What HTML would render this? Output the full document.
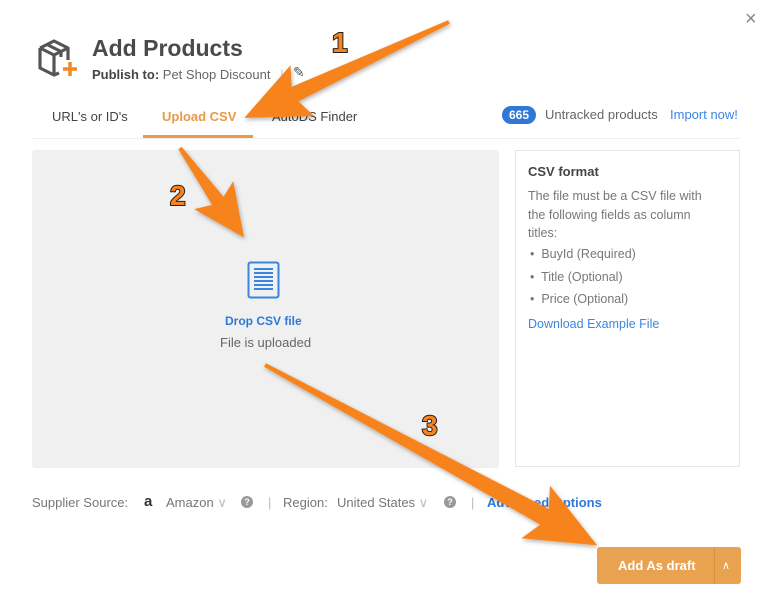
<!DOCTYPE html>
<html><head><style>
body{margin:0;width:771px;height:600px;background:#fff;font-family:"Liberation Sans",sans-serif;position:relative;overflow:hidden;color:#555}
.a{position:absolute;white-space:nowrap}
.b{position:absolute;white-space:nowrap;top:495px;font-size:13px;color:#777}
.q{position:absolute;top:496px;width:12px;height:12px;border-radius:6px;background:#999;color:#fff;font-size:9px;font-weight:bold;text-align:center;line-height:12px}
</style></head><body>
<div class="a" style="left:745px;top:8px;font-size:20px;color:#888">×</div>
<svg class="a" style="left:37px;top:38px" width="42" height="42" viewBox="0 0 42 42">
<path d="M3 10 L17 3 L31 10 L31 22 M3 10 L3 30 L17 37 L22 35 M3 10 L17 17 L31 10 M17 17 L17 37 M10 6.5 L24 13.5 L24 19" fill="none" stroke="#555" stroke-width="3.2" stroke-linejoin="round"/>
<path d="M33 24 V38 M26 31 H40" stroke="#f08a24" stroke-width="3.5"/>
</svg>
<div class="a" style="left:92px;top:35px;font-size:23px;font-weight:bold;color:#4a4a4a">Add Products</div>
<div class="a" style="left:92px;top:67px;font-size:13px;color:#666"><b style="color:#444">Publish to:</b> Pet Shop Discount <span style="color:#ccc;margin:0 6px">|</span></div>
<div class="a" style="left:293px;top:64px;font-size:14px;color:#555">✎</div>
<div class="a" style="left:52px;top:109px;font-size:13px;color:#444">URL's or ID's</div>
<div class="a" style="left:162px;top:109px;font-size:13px;color:#e89a45;font-weight:bold">Upload CSV</div>
<div class="a" style="left:143px;top:135px;width:110px;height:3px;background:#e89a45"></div>
<div class="a" style="left:272px;top:109px;font-size:13px;color:#444">AutoDS Finder</div>
<div class="a" style="left:32px;top:138px;width:708px;height:1px;background:#eee"></div>
<div class="a" style="left:502px;top:106px;width:34px;height:18px;border-radius:9px;background:#2f78d6;color:#fff;font-size:12px;font-weight:bold;text-align:center;line-height:18px">665</div>
<div class="a" style="left:545px;top:107px;font-size:13px;color:#666">Untracked products</div>
<div class="a" style="left:670px;top:107px;font-size:13px;color:#3b86e0">Import now!</div>
<div class="a" style="left:32px;top:150px;width:467px;height:318px;background:#f0f0f0;border-radius:3px"></div>
<svg class="a" style="left:247px;top:261px" width="33" height="38" viewBox="0 0 33 38"><rect x="1.5" y="1.5" width="30" height="35" rx="2" fill="none" stroke="#3a84de" stroke-width="2"/>
<g stroke="#3a84de" stroke-width="2"><path d="M7 8H26M7 12H26M7 16H26M7 20H26M7 24H26M7 28H26"/></g></svg>
<div class="a" style="left:225px;top:314px;font-size:12px;font-weight:bold;color:#2f78d6">Drop CSV file</div>
<div class="a" style="left:220px;top:335px;font-size:13px;color:#666">File is uploaded</div>
<div class="a" style="left:515px;top:150px;width:225px;height:317px;border:1px solid #e6e6e6;box-sizing:border-box"></div>
<div class="a" style="left:528px;top:164px;font-size:13px;font-weight:bold;color:#444">CSV format</div>
<div class="a" style="left:528px;top:187px;font-size:12.5px;line-height:18.5px;color:#777">The file must be a CSV file with<br>the following fields as column<br>titles:</div>
<div class="a" style="left:530px;top:247px;font-size:12.5px;color:#777">•&nbsp; BuyId (Required)</div>
<div class="a" style="left:530px;top:270px;font-size:12.5px;color:#777">•&nbsp; Title (Optional)</div>
<div class="a" style="left:530px;top:292px;font-size:12.5px;color:#777">•&nbsp; Price (Optional)</div>
<div class="a" style="left:528px;top:317px;font-size:12.5px;color:#3b86e0">Download Example File</div>
<div class="b" style="left:32px">Supplier Source:</div>
<div class="b" style="left:144px;color:#333;font-weight:bold;font-size:15px;top:493px">a</div>
<div class="b" style="left:166px">Amazon <span style="color:#bbb">∨</span></div>
<div class="q" style="left:241px">?</div>
<div class="b" style="left:268px;color:#bbb">|</div>
<div class="b" style="left:283px">Region:</div>
<div class="b" style="left:337px">United States <span style="color:#bbb">∨</span></div>
<div class="q" style="left:444px">?</div>
<div class="b" style="left:471px;color:#bbb">|</div>
<div class="b" style="left:487px;color:#2f78d6;font-weight:bold">Advanced Options</div>
<div class="a" style="left:597px;top:547px;width:144px;height:37px;background:#e9a24f;border-radius:3px"></div>
<div class="a" style="left:714px;top:547px;width:1px;height:37px;background:#d89040"></div>
<div class="a" style="left:618px;top:558px;font-size:13px;font-weight:bold;color:#fff">Add As draft</div>
<div class="a" style="left:722px;top:559px;font-size:11px;color:#fff">∧</div>
<svg class="a" style="left:0;top:0" width="771" height="600">
<defs><filter id="s"><feDropShadow dx="1" dy="2" stdDeviation="2" flood-color="#000" flood-opacity=".3"/></filter></defs>
<g fill="#f7831f" filter="url(#s)">
<polygon transform="translate(449,22) rotate(154.9)" points="0,-2 170,-8 162,-28 226,0 162,28 170,8 0,2"/>
<polygon transform="translate(180,148) rotate(54.4)" points="0,-2 65,-7 58,-24 110,0 58,24 65,7 0,2"/>
<polygon transform="translate(265,365) rotate(28.5)" points="0,-2 318,-9 308,-30 378,0 308,30 318,9 0,2"/>
</g>
<g font-family="Liberation Sans" font-weight="bold" font-size="28" fill="#f7831f" stroke="#222" stroke-width="2" paint-order="stroke">
<text x="332" y="52">1</text><text x="170" y="205">2</text><text x="422" y="435">3</text></g>
</svg>
</body></html>
